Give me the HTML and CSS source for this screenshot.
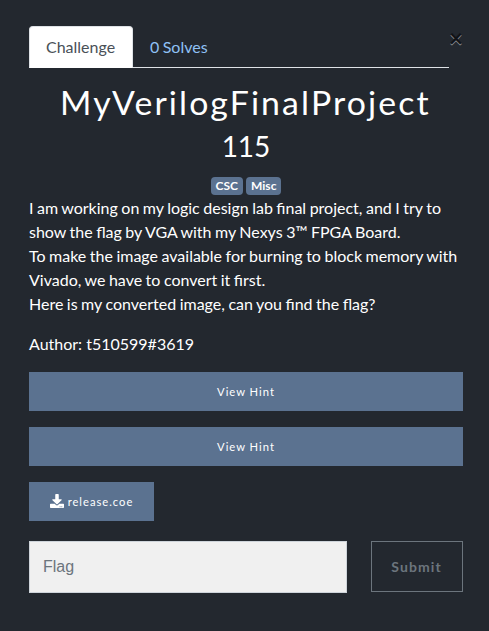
FILE: index.html
```html
<!DOCTYPE html>
<html lang="en">
<head>
<meta charset="utf-8">
<title>Challenge</title>
<link rel="stylesheet" href="styles.css">
</head>
<body>
<main class="modal">
  <header class="top">
    <nav class="tabs">
      <a class="tab active">Challenge</a>
      <a class="tab">0 Solves</a>
    </nav>
    <span class="close">×</span>
  </header>
  <h2 class="name"><span class="name-text">MyVerilogFinalProject</span></h2>
  <h3 class="value">115</h3>
  <div class="tags"><span class="badge">CSC</span><span class="badge misc">Misc</span></div>
  <p class="description">I am working on my logic design lab final project, and I try to show the flag by VGA with my Nexys 3™ FPGA Board.<br>To make the image available for burning to block memory with Vivado, we have to convert it first.<br>Here is my converted image, can you find the flag?</p>
  <p>Author: t510599#3619</p>
  <a class="btn">View Hint</a>
  <a class="btn">View Hint</a>
  <a class="btn file">
    <svg class="icon" viewBox="0 0 512 512"><path fill="currentColor" d="M216 0h80c13.300 0 24 10.700 24 24v168h87.700c17.800 0 26.700 21.500 14.100 34.100L269.700 378.300c-7.500 7.500-19.800 7.500-27.300 0L90.100 226.100c-12.600-12.600-3.700-34.100 14.100-34.100H192V24c0-13.300 10.700-24 24-24zm296 376v112c0 13.300-10.700 24-24 24H24c-13.300 0-24-10.700-24-24V376c0-13.300 10.700-24 24-24h146.700l49 49c20.100 20.100 52.500 20.100 72.600 0l49-49H488c13.300 0 24 10.700 24 24zm-124 88c0-11-9-20-20-20s-20 9-20 20 9 20 20 20 20-9 20-20zm64 0c0-11-9-20-20-20s-20 9-20 20 9 20 20 20 20-9 20-20z"/></svg>
    <span>release.coe</span>
  </a>
  <form class="answer">
    <input class="flag" type="text" placeholder="Flag">
    <button class="submit" type="button">Submit</button>
  </form>
</main>
</body>
</html>
```
FILE: styles.css
```css
* { box-sizing: border-box; }
body {
  margin: 0;
  min-height: 631px;
  background: #23282f;
  color: #fff;
  font: 16px/24px Lato, sans-serif;
}
.modal { padding: 26px 26px 0 29px; }
.top { display: flex; }
.tabs {
  display: flex;
  width: 420px;
  height: 42px;
  border-bottom: 1px solid #dee2e6;
}
.tab {
  height: 42px;
  padding: 8px 16px;
  border: 1px solid transparent;
  border-radius: 4px 4px 0 0;
  color: #8fc1f5;
  word-spacing: -.7px;
}
.active {
  width: 104px;
  background: #fff;
  border-color: #dee2e6 #dee2e6 #fff;
  color: #495057;
}
.close {
  width: 14px;
  color: #000;
  font-size: 24px;
  font-weight: 700;
  line-height: 24px;
  text-shadow: 0 1px 0 #fff;
  opacity: .5;
}
h2, h3 { margin: 0; font-weight: 400; text-align: center; }
.name {
  margin: 17px 2px 0 0;
  font-size: 32px;
  line-height: 36px;
  letter-spacing: 2px;
  white-space: nowrap;
}
.name-text { display: inline-block; transform: scaleX(1.057); }
.value { margin-top: 8px; font-size: 28px; line-height: 34px; }
.tags {
  display: flex;
  justify-content: center;
  gap: 3px;
  margin: 14px 0 1px;
}
.badge {
  height: 18px;
  padding: 0 5px;
  border-radius: 4px;
  background: #5b7290;
  font-size: 12px;
  font-weight: 700;
  line-height: 18px;
}
p { margin: 0 0 16px; }
.description { word-spacing: -.6px; }
.btn {
  display: flex;
  align-items: center;
  justify-content: center;
  height: 39px;
  margin-bottom: 16px;
  background: #5b7290;
  font-size: 11.2px;
  letter-spacing: 1px;
}
.file { width: 125px; gap: 4px; margin-bottom: 20px; }
.icon { width: 14px; height: 14px; margin-top: -1px; }
.answer { display: flex; justify-content: space-between; }
.flag {
  width: 318px;
  height: 52px;
  padding: 0 13px;
  border: 1px solid #ced4da;
  border-radius: 0;
  background: #f0f0f0;
  font: 16px "Liberation Sans", sans-serif;
}
.flag::placeholder { color: #6c757d; }
.submit {
  width: 92px;
  height: 51px;
  padding: 0 1px 0 0;
  border: 1px solid #6c757d;
  background: transparent;
  color: #6c757d;
  font: 700 14px Lato, sans-serif;
  letter-spacing: 1.1px;
}
```
